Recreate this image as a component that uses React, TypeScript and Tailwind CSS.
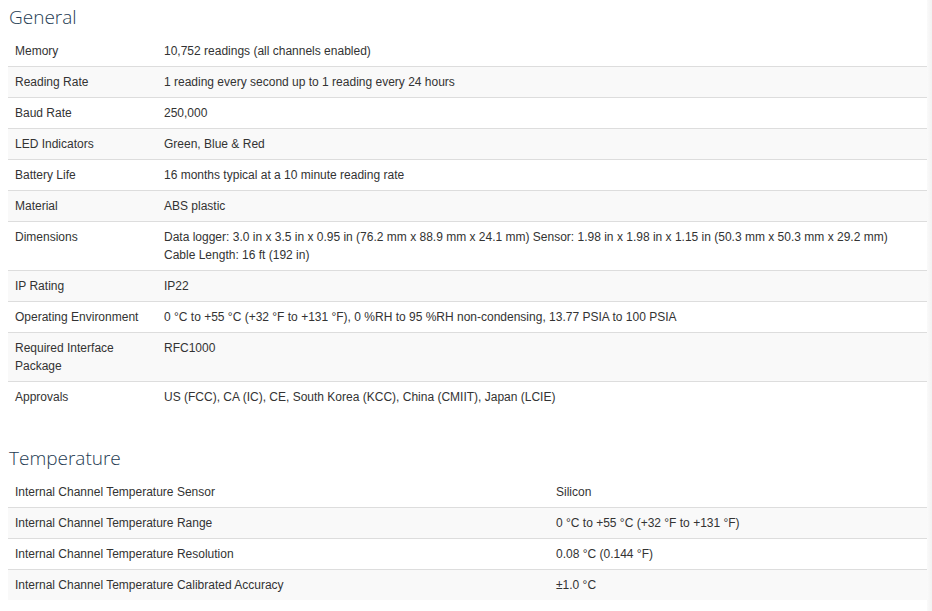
const general: [string, string][] = [
  ["Memory", "10,752 readings (all channels enabled)"],
  ["Reading Rate", "1 reading every second up to 1 reading every 24 hours"],
  ["Baud Rate", "250,000"],
  ["LED Indicators", "Green, Blue & Red"],
  ["Battery Life", "16 months typical at a 10 minute reading rate"],
  ["Material", "ABS plastic"],
  [
    "Dimensions",
    "Data logger: 3.0 in x 3.5 in x 0.95 in (76.2 mm x 88.9 mm x 24.1 mm) Sensor: 1.98 in x 1.98 in x 1.15 in (50.3 mm x 50.3 mm x 29.2 mm) Cable Length: 16 ft (192 in)",
  ],
  ["IP Rating", "IP22"],
  [
    "Operating Environment",
    "0 °C to +55 °C (+32 °F to +131 °F), 0 %RH to 95 %RH non-condensing, 13.77 PSIA to 100 PSIA",
  ],
  ["Required Interface Package", "RFC1000"],
  ["Approvals", "US (FCC), CA (IC), CE, South Korea (KCC), China (CMIIT), Japan (LCIE)"],
];

const temperature: [string, string][] = [
  ["Internal Channel Temperature Sensor", "Silicon"],
  ["Internal Channel Temperature Range", "0 °C to +55 °C (+32 °F to +131 °F)"],
  ["Internal Channel Temperature Resolution", "0.08 °C (0.144 °F)"],
  ["Internal Channel Temperature Calibrated Accuracy", "±1.0 °C"],
];

function SpecTable({ title, rows, labelWidth }: { title: string; rows: [string, string][]; labelWidth: string }) {
  return (
    <section className="mt-[6px] mb-[35px]">
      <h2 className="pl-px text-[19px] leading-[22px] font-light text-[#253b52] [font-family:'Open_Sans',sans-serif]">
        {title}
      </h2>
      <table className="mt-[7px] w-full border-collapse text-[12px] leading-[18px] text-[#333]">
        <tbody>
          {rows.map(([label, value], i) => (
            <tr key={label} className={i % 2 === 1 ? "bg-[#f9f9f9]" : "bg-white"}>
              <td
                className={`${labelWidth} px-[7px] py-[6px] align-top ${i > 0 ? "border-t border-[#ddd]" : "border-t border-transparent"}`}
              >
                {label}
              </td>
              <td className={`px-[8px] py-[6px] align-top ${i > 0 ? "border-t border-[#ddd]" : "border-t border-transparent"}`}>
                {value}
              </td>
            </tr>
          ))}
        </tbody>
      </table>
    </section>
  );
}

export default function App() {
  return (
    <div className="flex min-h-[611px] w-[932px] bg-white [font-family:'Liberation_Sans',Arial,sans-serif]">
      <main className="w-[927px] pl-2">
        <SpecTable title="General" rows={general} labelWidth="w-[148px]" />
        <SpecTable title="Temperature" rows={temperature} labelWidth="w-[540px]" />
      </main>
      <aside className="w-[5px] bg-gradient-to-r from-[#fafafa] to-[#f2f2f2]" />
    </div>
  );
}
